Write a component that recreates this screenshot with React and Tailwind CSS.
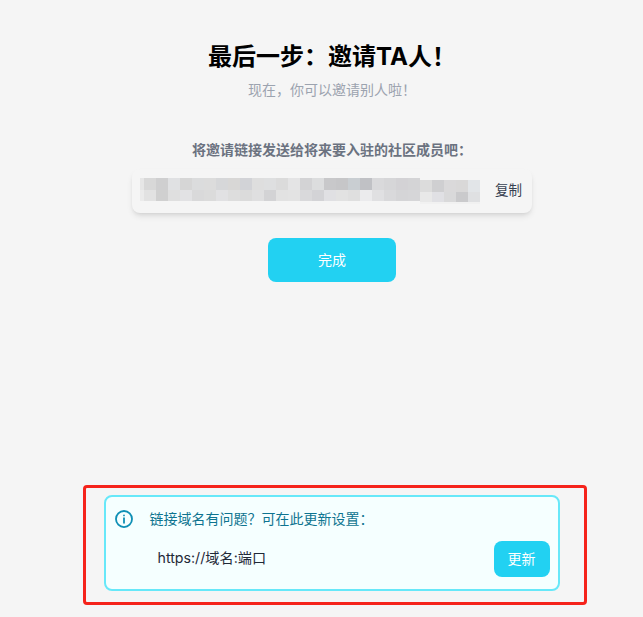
import React from 'react';

const font = { fontFamily: '"Inter", "Noto Sans CJK SC", sans-serif' };

// blurred link: the left part and the right part sit 2px apart vertically
const leftTop = ['#d8d8d8','#cfcfd0','#e0e1e3','#d6d6d6','#dbdcdd','#dcdcdc','#d6d7d9','#d8d7d6','#d2d3d7','#dedede','#dedfe0','#dbdbdb','#e4e4e5','#d3d3d5','#dcddde','#c8c8ca','#c6c6c8','#c9ced2','#c0c1c5','#d9d9db','#d6d6d8','#d3d2d5','#d4d4d6'];
const leftBottom = ['#e2e2e2','#d0d0d0','#dfdfdf','#e2e2e4','#d9d9da','#dbdbdb','#e1e1e3','#dddddd','#dbdbdb','#dfdfe0','#d3d3d5','#e2e2e2','#e3e3e3','#d9d9db','#d3d3d6','#e0e0e3','#e2e2e2','#dfdfdf','#ebebed','#e0e0e2','#d9d9db','#d5d5d7','#d6d6d8'];
const rightTop = ['#dcdcdc','#cfcfd1','#dad9da','#d9d8d8','#e2e5e8'];
const rightBottom = ['#e8e8e8','#e0e0e4','#d9d9da','#cacacc','#dfe0e2'];

function Blocks({ colors, className }) {
    return (
        <div className="flex">
            {colors.map((c, i) => (
                <div key={i} className={className} style={{ backgroundColor: c }} />
            ))}
        </div>
    );
}

function Mosaic() {
    return (
        <div className="flex items-start">
            <div className="flex flex-col">
                <div className="w-[4px] h-[12px] bg-[#e6e6e6]" />
                <div className="w-[4px] h-[11px] bg-[#ebebeb]" />
            </div>
            <div className="flex flex-col">
                <Blocks colors={leftTop} className="w-[12px] h-[12px]" />
                <Blocks colors={leftBottom} className="w-[12px] h-[11px]" />
            </div>
            <div className="flex flex-col mt-[2px] border-b-2 border-[#f1f1f1]">
                <Blocks colors={rightTop} className="w-[12px] h-[12px]" />
                <Blocks colors={rightBottom} className="w-[12px] h-[10px]" />
            </div>
        </div>
    );
}

export default function App() {
    return (
        <div className="h-[617px] overflow-hidden bg-[#f5f5f5] flex flex-col items-center pl-[21px]" style={font}>
            <h1 className="mt-[40px] text-[24px] leading-[34px] font-bold text-black">最后一步：邀请TA人！</h1>
            <p className="mt-[5px] text-[14px] leading-[22px] text-[#9ca3af]">现在，你可以邀请别人啦！</p>

            <p className="mt-[38px] text-[14px] leading-[22px] font-bold text-[#6b7280]">将邀请链接发送给将来要入驻的社区成员吧：</p>

            <div className="mt-[8px] w-[400px] h-[44px] rounded-lg bg-[#f5f5f5] shadow-md flex items-center justify-between pl-[8px] pr-[10px]">
                <Mosaic />
                <span className="text-[13.5px] pb-[2px] text-[#374151]">复制</span>
            </div>

            <button className="mt-[25px] w-[128px] h-[44px] pb-[2px] rounded-lg bg-[#22d1f2] text-white text-[14px]">完成</button>

            <div className="mt-[203px] -mr-[5px] w-[504px] h-[120px] border-[3px] border-[#f5231b] rounded-[4px] pt-[7px] pl-[18px]">
                <div className="w-[456px] h-[96px] rounded-lg border-2 border-[#67e8f9] bg-[#f5ffff] flex flex-col pl-[9px] pr-[8px]">
                    <div className="mt-[12px] flex items-center h-[20px]">
                        <svg className="w-[18px] h-[18px] text-[#0e8fb5]" viewBox="0 0 24 24" fill="none" stroke="currentColor" strokeWidth="2.4" strokeLinecap="round">
                            <circle cx="12" cy="12" r="10.7" />
                            <path d="M12 11v6" />
                            <path d="M12 7.2v.01" />
                        </svg>
                        <span className="ml-[17px] pb-[2px] text-[14px] text-[#0e7490]">链接域名有问题？可在此更新设置：</span>
                    </div>
                    <div className="mt-[12px] flex items-center justify-between">
                        <span className="ml-[43px] pb-[3px] text-[14.2px] text-[#1f2937]">https://域名:端口</span>
                        <button className="w-[56px] h-[36px] pb-[2px] rounded-lg bg-[#22d1f2] text-white text-[14px]">更新</button>
                    </div>
                </div>
            </div>
        </div>
    );
}
